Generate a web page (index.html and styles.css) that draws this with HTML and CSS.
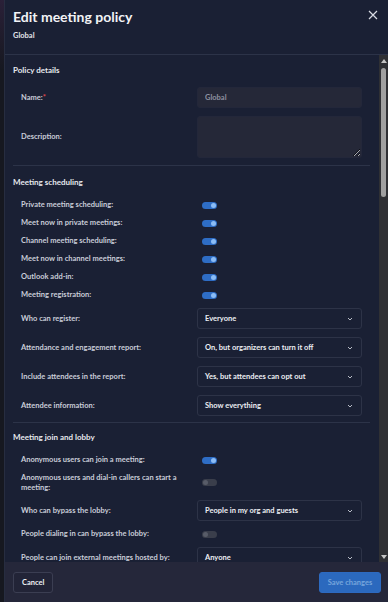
FILE: index.html
```html
<!DOCTYPE html>
<html lang="en">

<head>
    <meta charset="UTF-8">
    <meta name="viewport" content="width=device-width, initial-scale=1.0">
    <title>Edit meeting policy</title>
    <link rel="stylesheet" href="styles.css">
</head>

<body>
    <div class="panel">
        <header class="head">
            <div class="titles">
                <h1>Edit meeting policy</h1>
                <div class="sub">Global</div>
            </div>
            <button class="close" aria-label="Close">
                <svg width="10" height="10" viewBox="0 0 10 10"><path d="M1 1L9 9M9 1L1 9" /></svg>
            </button>
        </header>

        <div class="body">
            <div class="scroll">
                <section class="group">
                    <h2>Policy details</h2>
                    <div class="row">
                        <label>Name:<span class="req">*</span></label>
                        <input class="field" type="text" value="Global">
                    </div>
                    <div class="row">
                        <label>Description:</label>
                        <textarea class="field area"></textarea>
                    </div>
                </section>

                <section class="group">
                    <h2>Meeting scheduling</h2>
                    <div class="row"><label>Private meeting scheduling:</label><span class="toggle on"></span></div>
                    <div class="row"><label>Meet now in private meetings:</label><span class="toggle on"></span></div>
                    <div class="row"><label>Channel meeting scheduling:</label><span class="toggle on"></span></div>
                    <div class="row"><label>Meet now in channel meetings:</label><span class="toggle on"></span></div>
                    <div class="row"><label>Outlook add-in:</label><span class="toggle on"></span></div>
                    <div class="row"><label>Meeting registration:</label><span class="toggle on"></span></div>
                    <div class="row">
                        <label>Who can register:</label>
                        <div class="select">Everyone<svg viewBox="0 0 6 4"><path d="M1 1L3 3L5 1" /></svg></div>
                    </div>
                    <div class="row">
                        <label>Attendance and engagement report:</label>
                        <div class="select">On, but organizers can turn it off<svg viewBox="0 0 6 4"><path d="M1 1L3 3L5 1" /></svg></div>
                    </div>
                    <div class="row">
                        <label>Include attendees in the report:</label>
                        <div class="select">Yes, but attendees can opt out<svg viewBox="0 0 6 4"><path d="M1 1L3 3L5 1" /></svg></div>
                    </div>
                    <div class="row">
                        <label>Attendee information:</label>
                        <div class="select">Show everything<svg viewBox="0 0 6 4"><path d="M1 1L3 3L5 1" /></svg></div>
                    </div>
                </section>

                <section class="group">
                    <h2>Meeting join and lobby</h2>
                    <div class="row"><label>Anonymous users can join a meeting:</label><span class="toggle on"></span></div>
                    <div class="row"><label>Anonymous users and dial-in callers can start a meeting:</label><span class="toggle"></span></div>
                    <div class="row">
                        <label>Who can bypass the lobby:</label>
                        <div class="select">People in my org and guests<svg viewBox="0 0 6 4"><path d="M1 1L3 3L5 1" /></svg></div>
                    </div>
                    <div class="row"><label>People dialing in can bypass the lobby:</label><span class="toggle"></span></div>
                    <div class="row">
                        <label>People can join external meetings hosted by:</label>
                        <div class="select">Anyone<svg viewBox="0 0 6 4"><path d="M1 1L3 3L5 1" /></svg></div>
                    </div>
                </section>
            </div>
            <div class="scrollbar">
                <span class="arrow up"></span>
                <span class="track"><span class="thumb"></span></span>
                <span class="arrow down"></span>
            </div>
        </div>

        <footer class="foot">
            <button class="btn">Cancel</button>
            <button class="btn primary">Save changes</button>
        </footer>
    </div>
</body>

</html>
```

FILE: styles.css
```css
body {
    font-family: Lato, "Open Sans", sans-serif;
    background: linear-gradient(#2a2038, #161820 70px);
    color: #d6d9e2;
    margin: 0;
    height: 100vh;
    overflow: hidden;
}

.panel {
    margin-left: 4px;
    height: 100vh;
    background-color: #1a2034;
    border-left: 1px solid #272d40;
    display: flex;
    flex-direction: column;
}

.head {
    height: 54px;
    flex-shrink: 0;
    border-bottom: 1px solid #2c3348;
    padding: 0 10px 0 8px;
    display: flex;
    justify-content: space-between;
    align-items: flex-start;
}

h1 {
    margin: 8px 0 0;
    font-size: 14px;
    line-height: 18px;
    color: #f2f3f6;
    font-weight: 700;
}

.sub {
    margin-top: 5px;
    font-size: 7.5px;
    line-height: 10px;
    font-weight: 700;
    color: #e4e6ec;
}

.close {
    margin-top: 9px;
    padding: 0;
    width: 11px;
    height: 11px;
    background: none;
    border: none;
    display: flex;
    align-items: center;
    justify-content: center;
}

.close path {
    stroke: #d9dce4;
    stroke-width: 1.2;
    fill: none;
}

.body {
    flex: 1;
    min-height: 0;
    display: flex;
}

.scroll {
    flex: 1;
    overflow: hidden;
    padding: 0 9px 0 8px;
}

.group {
    display: flex;
    flex-direction: column;
    padding: 9px 0 3px;
}

.group + .group {
    border-top: 1px solid #2c3348;
    padding: 10px 0 2px;
}

.group + .group:last-child {
    padding-top: 8px;
}

h2 {
    margin: 0 0 7px;
    font-size: 8px;
    line-height: 12px;
    font-weight: 700;
    color: #e6e8ee;
}

.group + .group h2 {
    margin-bottom: 8px;
}

.row {
    display: grid;
    grid-template-columns: 176px 165px;
    align-items: center;
    min-height: 10px;
    padding: 4px 0 4px 8px;
}

.row label {
    font-size: 7.5px;
    line-height: 9.5px;
    font-weight: 700;
    color: #c9cdd8;
    padding-right: 14px;
}

.req {
    color: #e5484d;
}

.field {
    box-sizing: border-box;
    width: 165px;
    height: 21px;
    margin: 0;
    background-color: #252838;
    border: 1px solid #23273a;
    border-radius: 3px;
    padding: 0 7px;
    font-family: inherit;
    font-size: 7.5px;
    font-weight: 700;
    color: #8e91a0;
    outline: none;
}

.area {
    height: 42px;
    resize: vertical;
    display: block;
}

.select {
    box-sizing: border-box;
    height: 21px;
    border: 1px solid #2d3347;
    border-radius: 3px;
    padding: 0 8px 0 7px;
    display: flex;
    align-items: center;
    justify-content: space-between;
    font-size: 7.5px;
    font-weight: 700;
    color: #eceef3;
}

.select svg {
    width: 6px;
    height: 4px;
}

.select path {
    stroke: #b9bdc8;
    stroke-width: 1;
    fill: none;
}

.toggle {
    margin-left: 5px;
    width: 15px;
    height: 7px;
    border-radius: 4px;
    background-color: #3a3e4b;
    position: relative;
}

.toggle::after {
    content: '';
    position: absolute;
    top: 1px;
    left: 1px;
    width: 5px;
    height: 5px;
    border-radius: 50%;
    background-color: #585c68;
}

.toggle.on {
    background-color: #2e6dc5;
}

.toggle.on::after {
    left: auto;
    right: 1px;
    background-color: #8cbcf4;
}

.scrollbar {
    width: 9px;
    background-color: #2f3034;
    display: flex;
    flex-direction: column;
    align-items: center;
    padding: 4px 0 3px;
    box-sizing: border-box;
}

.arrow {
    width: 0;
    height: 0;
    border-left: 3px solid transparent;
    border-right: 3px solid transparent;
}

.arrow.up {
    border-bottom: 4px solid #c4c4c4;
}

.arrow.down {
    border-top: 4px solid #c4c4c4;
}

.track {
    flex: 1;
    width: 100%;
    display: flex;
    justify-content: center;
    padding-top: 5px;
}

.thumb {
    width: 5px;
    height: 129px;
    border-radius: 3px;
    background-color: #a0a0a0;
}

.foot {
    height: 40px;
    flex-shrink: 0;
    background-color: #25273a;
    padding: 10px 7px 0 8px;
    box-sizing: border-box;
    display: flex;
    justify-content: space-between;
    align-items: flex-start;
}

.btn {
    height: 21px;
    padding: 0 8px;
    border: 1px solid #3b3e52;
    border-radius: 3px;
    background-color: #222437;
    color: #eef0f4;
    font-family: inherit;
    font-size: 7.5px;
    font-weight: 700;
}

.btn.primary {
    width: 62px;
    padding: 0;
    border-color: #2d6ac0;
    background-color: #2b69be;
    color: #76a6dc;
}
```
